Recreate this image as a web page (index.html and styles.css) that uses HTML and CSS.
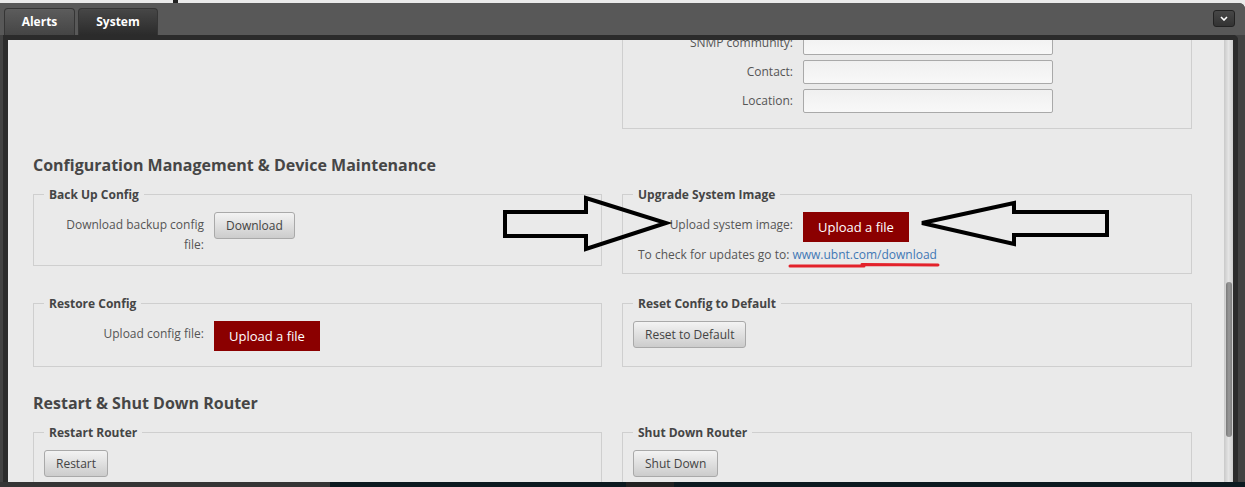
FILE: index.html
```html
<!DOCTYPE html>
<html lang="en">
  <head>
    <meta charset="UTF-8" />
    <meta name="viewport" content="width=device-width, initial-scale=1.0" />
    <title>System</title>
    <link rel="stylesheet" href="styles.css">
  </head>
  <body>
    <div class="top-strip"><span class="mark"></span></div>

    <div class="window">
      <div class="window-head">
        <div class="tab">Alerts</div>
        <div class="tab active">System</div>
        <button class="collapse" title="Collapse">
          <svg width="8" height="5" viewBox="0 0 8 5"><polyline points="1,1 4,4 7,1" fill="none" stroke="#fff" stroke-width="1.6"/></svg>
        </button>
      </div>

      <div class="frame">
        <div class="main">
          <div class="content">
            <div class="cols">
              <div></div>
              <fieldset class="snmp">
                <div class="field">
                  <label class="lbl">SNMP community:</label>
                  <input type="text" class="text">
                </div>
                <div class="field">
                  <label class="lbl">Contact:</label>
                  <input type="text" class="text">
                </div>
                <div class="field">
                  <label class="lbl">Location:</label>
                  <input type="text" class="text">
                </div>
              </fieldset>
            </div>

            <h2>Configuration Management &amp; Device Maintenance</h2>
            <div class="cols">
              <fieldset>
                <legend>Back Up Config</legend>
                <div class="row">
                  <label class="lbl">Download backup config file:</label>
                  <button class="btn">Download</button>
                </div>
              </fieldset>
              <fieldset>
                <legend>Upgrade System Image</legend>
                <div class="row">
                  <label class="lbl">Upload system image:</label>
                  <button class="btn-upload">Upload a file</button>
                </div>
                <div class="note">To check for updates go to: <a href="#">www.ubnt.com/download</a></div>
              </fieldset>
              <fieldset>
                <legend>Restore Config</legend>
                <div class="row">
                  <label class="lbl">Upload config file:</label>
                  <button class="btn-upload">Upload a file</button>
                </div>
              </fieldset>
              <fieldset>
                <legend>Reset Config to Default</legend>
                <div class="row">
                  <button class="btn">Reset to Default</button>
                </div>
              </fieldset>
            </div>

            <h2>Restart &amp; Shut Down Router</h2>
            <div class="cols">
              <fieldset>
                <legend>Restart Router</legend>
                <div class="row">
                  <button class="btn">Restart</button>
                </div>
              </fieldset>
              <fieldset>
                <legend>Shut Down Router</legend>
                <div class="row">
                  <button class="btn">Shut Down</button>
                </div>
              </fieldset>
            </div>
          </div>
        </div>
        <div class="scrollbar"><div class="thumb"></div></div>
      </div>
    </div>

    <div class="footer">
      <span class="f-left"></span>
      <span class="f-gap"></span>
      <span class="f-item"></span>
    </div>

    <!-- hand drawn annotations on top of the screenshot -->
    <svg class="marks" width="1245" height="487" viewBox="0 0 1245 487">
      <polygon points="505,212 586,212 586,198 666,223 586,249 586,236 505,236" fill="none" stroke="#000" stroke-width="4"/>
      <polygon points="922,223 1014,203 1014,212 1107,212 1107,235 1014,235 1014,244" fill="none" stroke="#000" stroke-width="4"/>
      <path d="M790 266 L864 266 M862 264.5 L938 265" fill="none" stroke="#e3222b" stroke-width="3" stroke-linecap="round"/>
    </svg>
  </body>
</html>
```

FILE: styles.css
```css
body {
  margin: 0;
  height: 487px;
  overflow: hidden;
  position: relative;
  display: flex;
  flex-direction: column;
  background-color: #eaeaea;
  font-family: 'Open Sans', 'Liberation Sans', sans-serif;
  font-size: 12px;
  color: #555;
}
.top-strip {
  height: 3px;
  flex: none;
}
.mark {
  display: block;
  width: 5px;
  height: 3px;
  margin-left: 173px;
  background-color: #222;
}
.window {
  flex: 1;
  min-height: 0;
  display: flex;
  flex-direction: column;
  background-color: #424242;
  border-top-right-radius: 6px;
  padding: 0 7px 0 3px;
}
.window-head {
  height: 32px;
  flex: none;
  display: flex;
  align-items: flex-end;
  gap: 3px;
  background-color: #585858;
  margin: 0 -7px 0 -3px;
  padding: 0 10px 0 4px;
  border-top-right-radius: 6px;
}
.tab {
  height: 26px;
  line-height: 25px;
  text-align: center;
  color: #fff;
  font-weight: 700;
  font-size: 12px;
  border: 1px solid #353535;
  border-bottom: 0;
  border-radius: 4px 4px 0 0;
  background: linear-gradient(#5c5c5c, #454545);
  width: 69px;
}
.tab.active {
  width: 78px;
  background: linear-gradient(#474747, #2b2b2b);
}
.collapse {
  margin-left: auto;
  align-self: flex-start;
  margin-top: 7px;
  width: 22px;
  height: 17px;
  padding: 0;
  border: 1px solid #222;
  border-radius: 3px;
  background: linear-gradient(#474747, #333);
  display: flex;
  align-items: center;
  justify-content: center;
}
.frame {
  flex: 1;
  min-height: 0;
  display: flex;
  border: 5px solid #2b2b2b;
  border-bottom: 0;
  border-top-right-radius: 5px;
}
.main {
  flex: 1;
  overflow: hidden;
  background-color: #eaeaea;
}
/* the panel is scrolled down a little */
.content {
  margin-top: -19px;
  padding: 0 25px;
}
.scrollbar {
  width: 9px;
  flex: none;
  background: linear-gradient(to right, #c9c9c9, #e4e4e4 50%, #cdcdcd);
}
.thumb {
  width: 6px;
  height: 155px;
  margin: 242px 0 0 2px;
  border-radius: 3px;
  background: linear-gradient(to right, #7a7a7a, #999 50%, #7d7d7d);
}
.cols {
  display: grid;
  grid-template-columns: 569px 570px;
  column-gap: 20px;
  row-gap: 21px;
  align-items: start;
}
h2 {
  margin: 25px 0 10px;
  font-size: 16px;
  line-height: 22px;
  font-weight: 700;
  color: #464646;
}
fieldset {
  margin: 0;
  min-width: 0;
  border: 1px solid #cfcfcf;
  padding: 9px 10px 10px;
}
legend {
  padding: 0 5px;
  font-weight: 700;
  font-size: 12px;
  line-height: 17px;
  color: #454545;
}
.row {
  display: flex;
  align-items: flex-start;
  min-height: 35px;
}
.lbl {
  flex: 0 0 160px;
  margin-right: 10px;
  padding-top: 3px;
  line-height: 20px;
  text-align: right;
}
.field {
  display: flex;
  align-items: center;
  height: 24px;
  margin-bottom: 5px;
}
.field .lbl {
  padding-top: 0;
}
.text {
  width: 250px;
  height: 24px;
  box-sizing: border-box;
  border: 1px solid #a9a9a9;
  border-radius: 2px;
  background: linear-gradient(#f0f0f0, #f8f8f8);
}
.btn {
  height: 27px;
  padding: 0 11px;
  border: 1px solid #a9a9a9;
  border-radius: 3px;
  background: linear-gradient(#f3f3f3, #cccccc);
  color: #444;
  font-family: inherit;
  font-size: 12px;
}
.btn-upload {
  height: 30px;
  padding: 0 15px;
  border: 0;
  background-color: #8b0000;
  color: #fff;
  font-family: inherit;
  font-size: 13px;
}
.note {
  margin-left: 5px;
  line-height: 16px;
}
.note a {
  color: #3f78b5;
  text-decoration: none;
}
.footer {
  height: 5px;
  flex: none;
  display: flex;
  background-color: #0c1a20;
}
.f-left {
  width: 330px;
  background-color: #353535;
}
.f-gap {
  width: 296px;
}
.f-item {
  width: 48px;
  background-color: #222;
}
.marks {
  position: absolute;
  top: 0;
  left: 0;
  pointer-events: none;
}
```
